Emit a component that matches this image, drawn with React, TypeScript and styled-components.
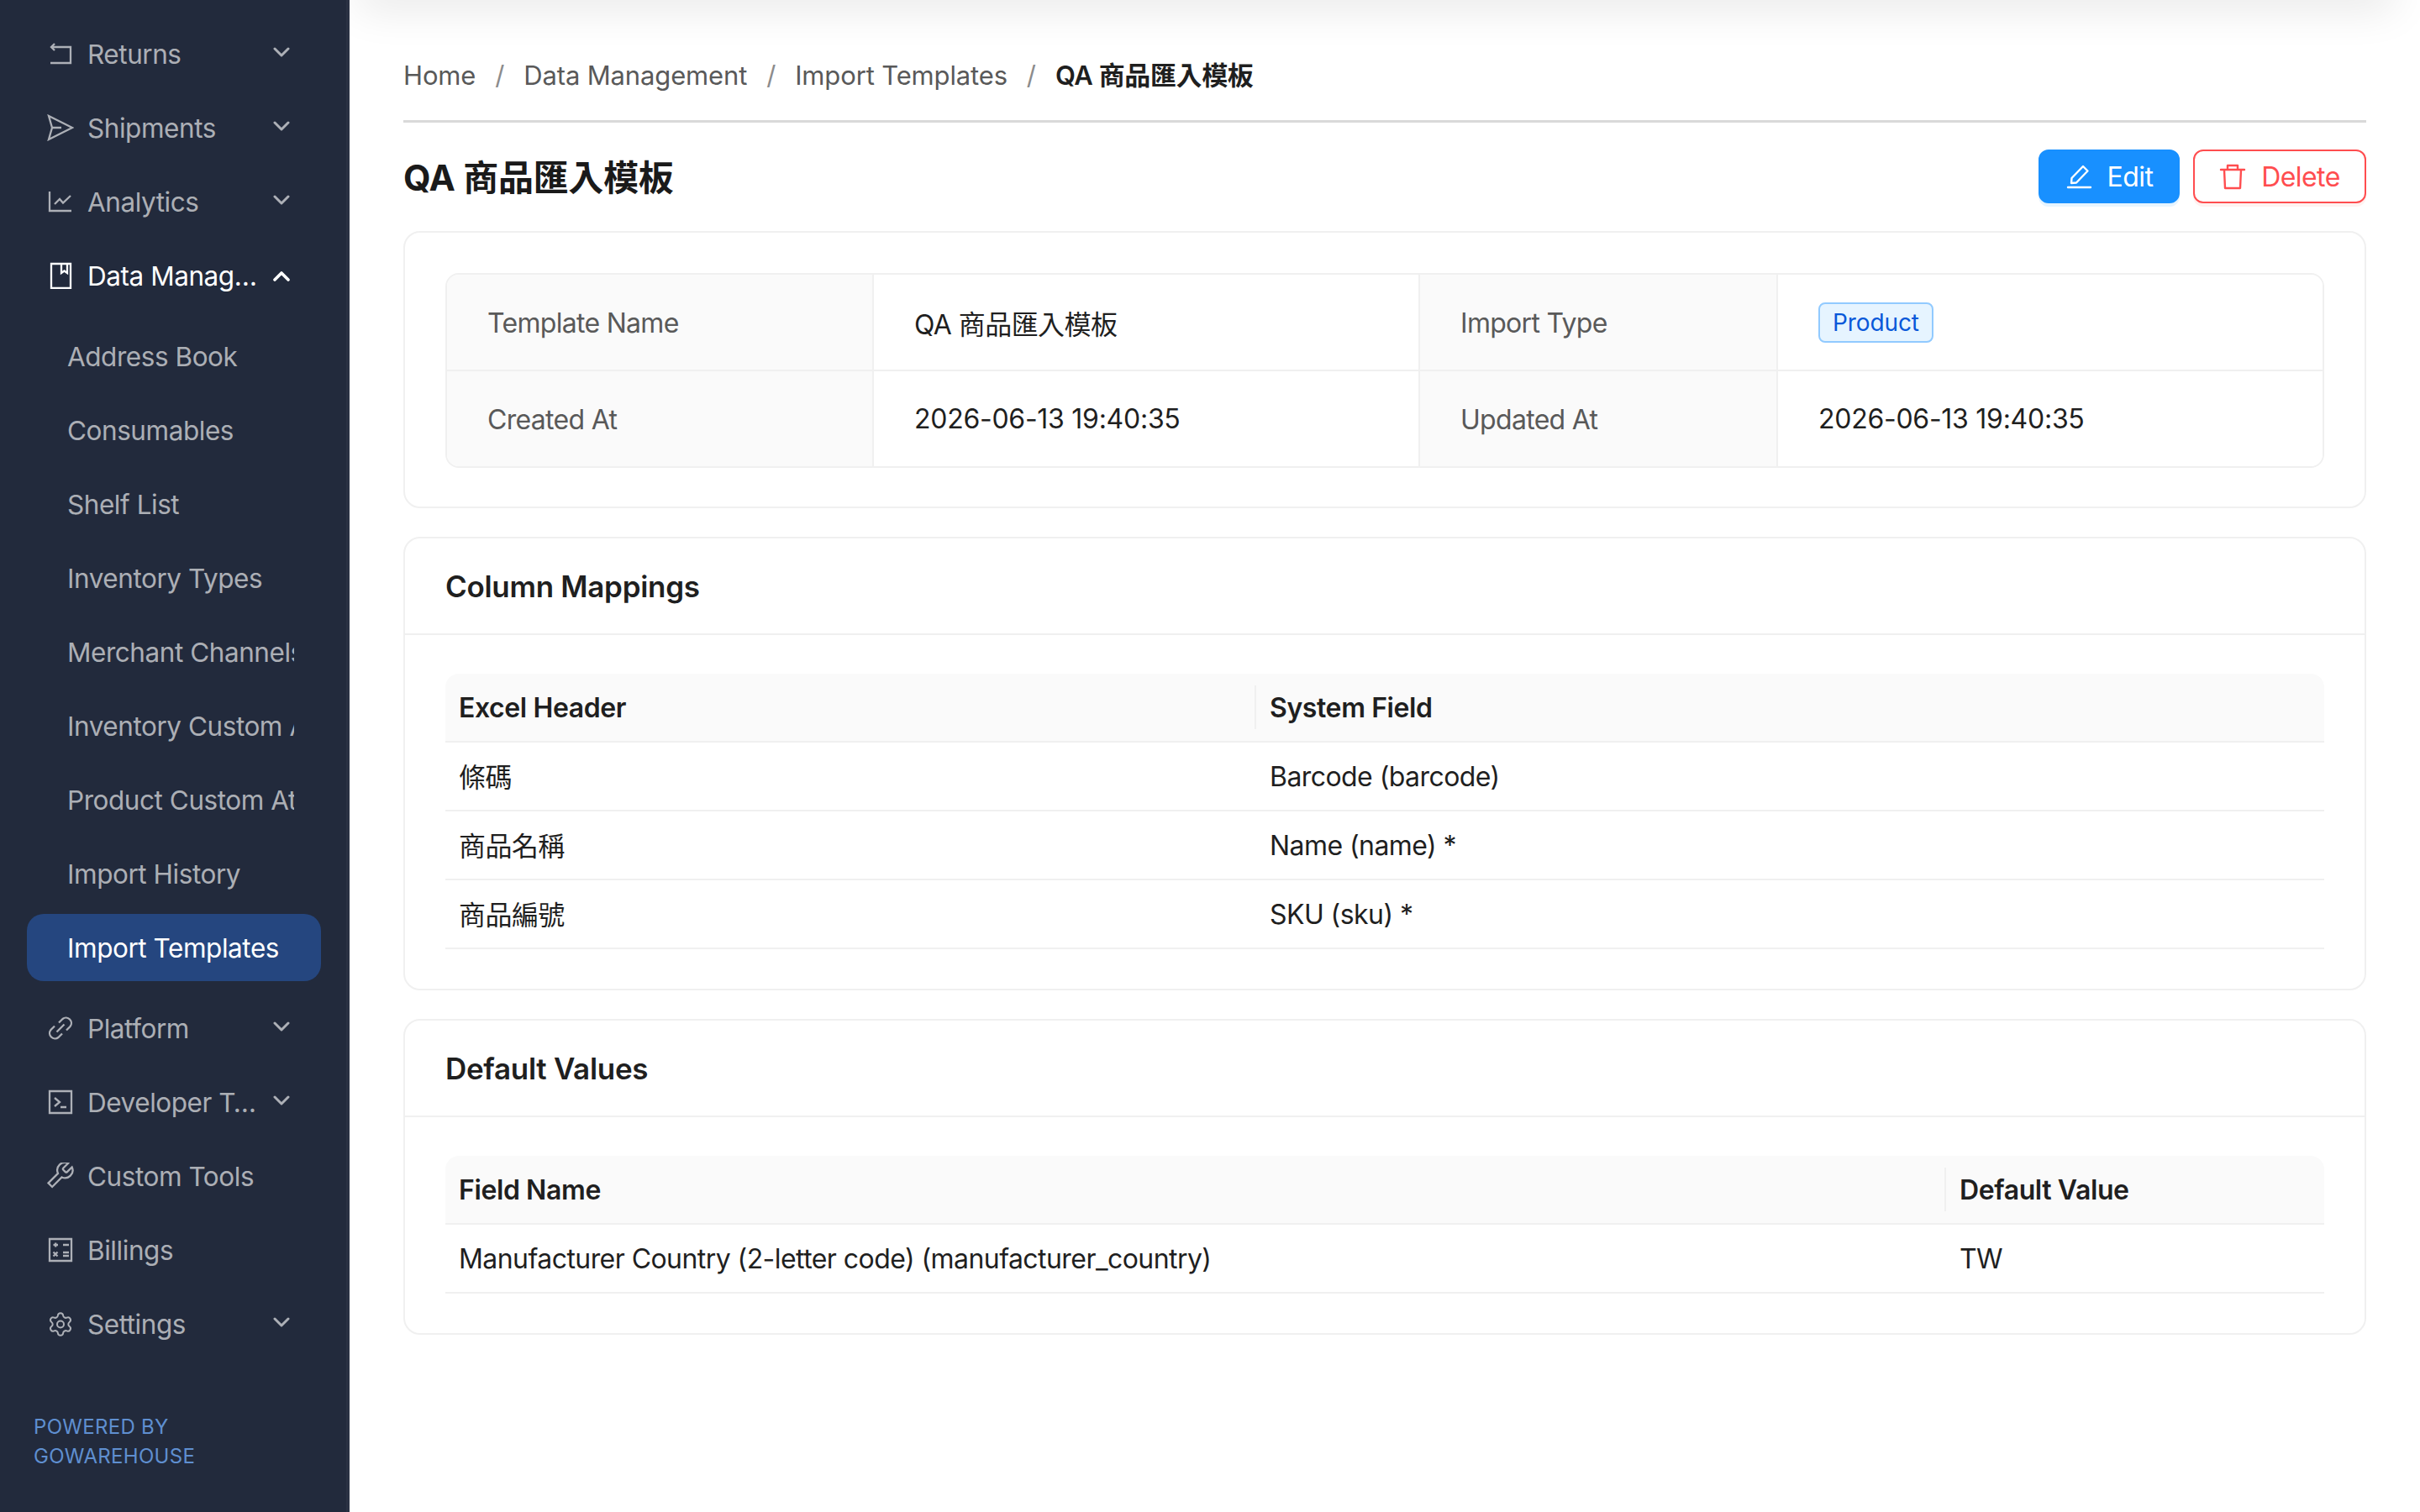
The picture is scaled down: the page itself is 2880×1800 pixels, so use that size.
import React from 'react';
import styled, { createGlobalStyle } from 'styled-components';
import { Settings } from 'lucide-react';

const GlobalStyle = createGlobalStyle`
  html, body {
    margin: 0;
    padding: 0;
    background: #fff;
  }
  body {
    font-family: Inter, "Noto Sans CJK TC", sans-serif;
    color: #1f1f1f;
  }
  * {
    box-sizing: border-box;
  }
`;

const Page = styled.div`
  display: flex;
  width: 2880px;
  height: 1800px;
  overflow: hidden;
`;

const Sidebar = styled.aside`
  position: relative;
  z-index: 2;
  flex: none;
  display: flex;
  flex-direction: column;
  width: 416px;
  height: 100%;
  padding-top: 20px;
  background: #222a3c;
  border-right: 4px solid #2a3143;
`;

const NavItem = styled.div<{ $open?: boolean }>`
  display: flex;
  align-items: center;
  flex: none;
  height: 80px;
  margin: 4px 30px 4px 32px;
  padding: 0 37px 0 24px;
  font-size: 31.5px;
  letter-spacing: -0.45px;
  color: ${p => (p.$open ? '#fff' : 'rgba(255, 255, 255, 0.63)')};
`;

const NavIcon = styled.svg`
  flex: none;
  width: 32px;
  height: 32px;
  margin-right: 16px;
  fill: none;
  stroke: currentColor;
  stroke-width: 2.3;
`;

const GearWrap = styled.span`
  display: flex;
  flex: none;
  width: 32px;
  margin-right: 16px;
  justify-content: center;
`;

const NavLabel = styled.span`
  flex: 1;
  min-width: 0;
  overflow: hidden;
  white-space: nowrap;
  text-overflow: ellipsis;
`;

const Chevron = styled.svg<{ $open?: boolean }>`
  flex: none;
  width: 20px;
  height: 12px;
  margin: ${p => (p.$open ? '2px 0 0 12px' : '-4px 0 0 12px')};
  fill: none;
  stroke: currentColor;
  stroke-width: ${p => (p.$open ? 3.6 : 3)};
  stroke-linecap: round;
  stroke-linejoin: round;
`;

const SubMenu = styled.div`
  display: flex;
  flex-direction: column;
  flex: none;
  padding: 8px 0;
`;

const SubItem = styled.div<{ $active?: boolean }>`
  display: flex;
  align-items: center;
  flex: none;
  height: 80px;
  margin: 4px 30px 4px 32px;
  padding-left: 48px;
  font-size: 31.5px;
  letter-spacing: -0.45px;
  border-radius: 20px;
  color: ${p => (p.$active ? '#fff' : 'rgba(255, 255, 255, 0.63)')};
  background: ${p => (p.$active ? '#25467f' : 'transparent')};
`;

const SubLabel = styled.span`
  display: block;
  width: 270px;
  overflow: hidden;
  white-space: nowrap;
`;

const PoweredBy = styled.div`
  margin-top: auto;
  padding: 0 0 49px 40px;
  font-size: 24px;
  line-height: 35px;
  letter-spacing: 0.3px;
  color: #5f8fd0;
`;

const Main = styled.main`
  position: relative;
  flex: 1;
  min-width: 0;
  padding: 0 64px;
  overflow: hidden;
`;

const TopShadow = styled.div`
  position: absolute;
  top: -40px;
  left: 10px;
  right: 30px;
  height: 40px;
  box-shadow: 0 10px 50px rgba(0, 0, 0, 0.1);
`;

const Breadcrumb = styled.nav`
  display: flex;
  align-items: center;
  height: 146px;
  padding: 66px 0 30px;
  font-size: 31px;
  letter-spacing: -0.15px;
  line-height: 48px;
  color: #595959;
  border-bottom: 3px solid #d9d9d9;
`;

const Crumb = styled.span<{ $current?: boolean }>`
  font-weight: ${p => (p.$current ? 600 : 400)};
  letter-spacing: ${p => (p.$current ? '-0.4px' : 'inherit')};
  color: ${p => (p.$current ? '#1f1f1f' : '#595959')};
`;

const CrumbSep = styled.span`
  margin: 0 23px;
  color: #8c8c8c;
`;

const TitleRow = styled.div`
  display: flex;
  align-items: center;
  justify-content: space-between;
  height: 64px;
  margin: 32px 0 33px;
`;

const Title = styled.h1`
  margin: -3px 0 0;
  font-size: 42px;
  font-weight: 700;
  letter-spacing: -0.3px;
  color: #1a1a1a;
`;

const Actions = styled.div`
  display: flex;
  gap: 16px;
`;

const ActionButton = styled.button<{ $danger?: boolean }>`
  display: flex;
  align-items: center;
  justify-content: center;
  gap: 18px;
  height: 64px;
  width: ${p => (p.$danger ? '206px' : '168px')};
  padding: 0;
  font: inherit;
  font-size: 32px;
  letter-spacing: -0.56px;
  border-radius: 12px;
  border: 2px solid ${p => (p.$danger ? '#ff4d4f' : '#1890ff')};
  background: ${p => (p.$danger ? '#fff' : '#1890ff')};
  color: ${p => (p.$danger ? '#ff4d4f' : '#fff')};
  box-shadow: 0 4px 0 ${p => (p.$danger ? 'rgba(255, 38, 5, 0.06)' : 'rgba(5, 145, 255, 0.1)')};
`;

const ButtonIcon = styled.svg`
  flex: none;
  width: 32px;
  height: 32px;
  fill: none;
  stroke: currentColor;
  stroke-width: 2.4;
  stroke-linejoin: round;
  stroke-linecap: round;
`;

const Card = styled.section`
  margin-bottom: 34px;
  background: #fff;
  border: 2px solid #f0f0f0;
  border-radius: 20px;
`;

const CardHeader = styled.h2`
  display: flex;
  align-items: center;
  height: 115px;
  margin: 0;
  padding: 0 48px;
  font-size: 35px;
  letter-spacing: -0.3px;
  font-weight: 600;
  color: #1f1f1f;
  border-bottom: 2px solid #f0f0f0;
`;

const CardBody = styled.div<{ $top: number; $bottom: number }>`
  padding: ${p => p.$top}px 48px ${p => p.$bottom}px;
`;

const Descriptions = styled.div`
  display: grid;
  grid-template-columns: 508px 650px 426px 1fr;
  grid-template-rows: 115px 113px;
  border: 2px solid #f0f0f0;
  border-radius: 16px;
  overflow: hidden;
`;

const DescCell = styled.div<{ $label?: boolean; $last?: boolean; $bottom?: boolean }>`
  display: flex;
  align-items: center;
  padding: ${p => (p.$label ? '2px' : '0')} 0 0 48px;
  font-size: 32px;
  letter-spacing: ${p => (p.$label ? '-0.7px' : '-0.56px')};
  color: ${p => (p.$label ? '#595959' : '#1f1f1f')};
  background: ${p => (p.$label ? '#fafafa' : '#fff')};
  border-right: ${p => (p.$last ? 'none' : '2px solid #f0f0f0')};
  border-bottom: ${p => (p.$bottom ? 'none' : '2px solid #f0f0f0')};
`;

const Timestamp = styled.span`
  letter-spacing: -0.27px;
`;

const Tag = styled.span`
  display: inline-flex;
  align-items: center;
  height: 48px;
  padding: 0 15px;
  font-size: 28px;
  letter-spacing: -0.1px;
  color: #0958d9;
  background: #e6f4ff;
  border: 2px solid #91caff;
  border-radius: 8px;
`;

const TableRow = styled.div<{ $first: number; $head?: boolean }>`
  display: grid;
  grid-template-columns: ${p => p.$first}px 1fr;
  height: 82px;
  font-size: 32px;
  letter-spacing: ${p => (p.$head ? '-0.4px' : '-0.56px')};
  font-weight: ${p => (p.$head ? 600 : 400)};
  background: ${p => (p.$head ? '#fafafa' : '#fff')};
  border-bottom: 2px solid #f0f0f0;
  border-radius: ${p => (p.$head ? '16px 16px 0 0' : '0')};
`;

const TableCell = styled.div<{ $divider?: boolean; $cjk?: boolean }>`
  position: relative;
  display: flex;
  align-items: center;
  padding: 0 0 ${p => (p.$cjk ? '2px' : '0')} 16px;

  ${p =>
    p.$divider
      ? `&::after {
    content: '';
    position: absolute;
    top: 14px;
    bottom: 14px;
    right: 0;
    width: 2px;
    background: #f0f0f0;
  }`
      : ''}
`;

const navTop = [
  {
    label: 'Returns',
    chevron: true,
    icon: (
      <NavIcon viewBox="0 0 32 32">
        <path d="M9 4 5 8l4 4M5 8h23v19H4" />
      </NavIcon>
    ),
  },
  {
    label: 'Shipments',
    chevron: true,
    icon: (
      <NavIcon viewBox="0 0 32 32">
        <path d="M2 2 30 16 2 30l4-14zM6 16h11" />
      </NavIcon>
    ),
  },
  {
    label: 'Analytics',
    chevron: true,
    icon: (
      <NavIcon viewBox="0 0 32 32">
        <path d="M3 4v23h26M9 19l6-6 4 4.500 9-8.500" />
      </NavIcon>
    ),
  },
];

const navBottom = [
  {
    label: 'Platform',
    chevron: true,
    icon: (
      <NavIcon viewBox="0 0 32 32">
        <path d="M14 9.500 18.500 5a6.400 6.400 0 0 1 9 9L23 18.500M18 22.500 13.500 27a6.400 6.400 0 0 1-9-9L9 13.500M11.500 20.500l9-9" />
      </NavIcon>
    ),
  },
  {
    label: 'Developer Tools',
    chevron: true,
    icon: (
      <NavIcon viewBox="0 0 32 32">
        <path d="M3 3h26v26H3zM9 11l6 5-6 5M16 22h7" />
      </NavIcon>
    ),
  },
  {
    label: 'Custom Tools',
    chevron: false,
    icon: (
      <NavIcon viewBox="2 2 21 21" style={{ strokeWidth: 1.5 }}>
        <path d="M14.700 6.300a1 1 0 0 0 0 1.400l1.600 1.600a1 1 0 0 0 1.400 0l3.770-3.770a6 6 0 0 1-7.940 7.940L6 21l-3-3 7.530-7.530a6 6 0 0 1 7.940-7.940l-3.760 3.760z" />
      </NavIcon>
    ),
  },
  {
    label: 'Billings',
    chevron: false,
    icon: (
      <NavIcon viewBox="0 0 32 32">
        <path d="M3 3h26v26H3zM7.500 10H13M10.200 7.500v5M19 10h7M7.500 18.500l5 5M12.500 18.500l-5 5M19 19h7M19 23h7" />
      </NavIcon>
    ),
  },
  {
    label: 'Settings',
    chevron: true,
    icon: (
      <GearWrap>
        <Settings size={37} strokeWidth={1.5} />
      </GearWrap>
    ),
  },
];

const subItems = [
  'Address Book',
  'Consumables',
  'Shelf List',
  'Inventory Types',
  'Merchant Channels',
  'Inventory Custom Attributes',
  'Product Custom Attributes',
  'Import History',
];

const Caret = ({ open }: { open?: boolean }) => (
  <Chevron $open={open} viewBox="0 0 20 12">
    <polyline points={open ? '2,10 10,2 18,10' : '2,2 10,10 18,2'} />
  </Chevron>
);

const mappings = [
  ['條碼', 'Barcode (barcode)'],
  ['商品名稱', 'Name (name) *'],
  ['商品編號', 'SKU (sku) *'],
];

const App: React.FC = () => (
  <>
    <GlobalStyle />
    <Page>
      <Sidebar>
        {navTop.map(item => (
          <NavItem key={item.label}>
            {item.icon}
            <NavLabel>{item.label}</NavLabel>
            <Caret />
          </NavItem>
        ))}
        <NavItem $open>
          <NavIcon viewBox="0 0 32 32">
            <path d="M5 2h23v29H5zM17 2v11l3.500-2.500L24 13V2" />
          </NavIcon>
          <NavLabel>Data Management</NavLabel>
          <Caret open />
        </NavItem>
        <SubMenu>
          {subItems.map(name => (
            <SubItem key={name}>
              <SubLabel>{name}</SubLabel>
            </SubItem>
          ))}
          <SubItem $active>
            <SubLabel>Import Templates</SubLabel>
          </SubItem>
        </SubMenu>
        {navBottom.map(item => (
          <NavItem key={item.label}>
            {item.icon}
            <NavLabel>{item.label}</NavLabel>
            {item.chevron && <Caret />}
          </NavItem>
        ))}
        <PoweredBy>
          POWERED BY
          <br />
          GOWAREHOUSE
        </PoweredBy>
      </Sidebar>
      <Main>
        <TopShadow />
        <Breadcrumb>
          <Crumb>Home</Crumb>
          <CrumbSep>/</CrumbSep>
          <Crumb>Data Management</Crumb>
          <CrumbSep>/</CrumbSep>
          <Crumb>Import Templates</Crumb>
          <CrumbSep>/</CrumbSep>
          <Crumb $current>QA 商品匯入模板</Crumb>
        </Breadcrumb>
        <TitleRow>
          <Title>QA 商品匯入模板</Title>
          <Actions>
            <ActionButton>
              <ButtonIcon viewBox="0 0 32 32">
                <path d="M3 29h27M7 24l.5-6L21 4l5.500 5.500L13 23.500z" />
              </ButtonIcon>
              Edit
            </ActionButton>
            <ActionButton $danger>
              <ButtonIcon viewBox="0 0 32 32">
                <path d="M2 8h28M10 8V3h12v5M6 8l1 22h18l1-22" />
              </ButtonIcon>
              Delete
            </ActionButton>
          </Actions>
        </TitleRow>
        <Card>
          <CardBody $top={48} $bottom={46}>
            <Descriptions>
              <DescCell $label>Template Name</DescCell>
              <DescCell>QA 商品匯入模板</DescCell>
              <DescCell $label>Import Type</DescCell>
              <DescCell $last>
                <Tag>Product</Tag>
              </DescCell>
              <DescCell $label $bottom>Created At</DescCell>
              <DescCell $bottom>
                <Timestamp>2026-06-13 19:40:35</Timestamp>
              </DescCell>
              <DescCell $label $bottom>Updated At</DescCell>
              <DescCell $last $bottom>
                <Timestamp>2026-06-13 19:40:35</Timestamp>
              </DescCell>
            </Descriptions>
          </CardBody>
        </Card>
        <Card>
          <CardHeader>Column Mappings</CardHeader>
          <CardBody $top={46} $bottom={47}>
            <TableRow $first={965} $head>
              <TableCell $divider>Excel Header</TableCell>
              <TableCell>System Field</TableCell>
            </TableRow>
            {mappings.map(([header, field]) => (
              <TableRow key={header} $first={965}>
                <TableCell $cjk>{header}</TableCell>
                <TableCell>{field}</TableCell>
              </TableRow>
            ))}
          </CardBody>
        </Card>
        <Card>
          <CardHeader>Default Values</CardHeader>
          <CardBody $top={46} $bottom={47}>
            <TableRow $first={1786} $head>
              <TableCell $divider>Field Name</TableCell>
              <TableCell>Default Value</TableCell>
            </TableRow>
            <TableRow $first={1786}>
              <TableCell>Manufacturer Country (2-letter code) (manufacturer_country)</TableCell>
              <TableCell>TW</TableCell>
            </TableRow>
          </CardBody>
        </Card>
      </Main>
    </Page>
  </>
);

export default App;
